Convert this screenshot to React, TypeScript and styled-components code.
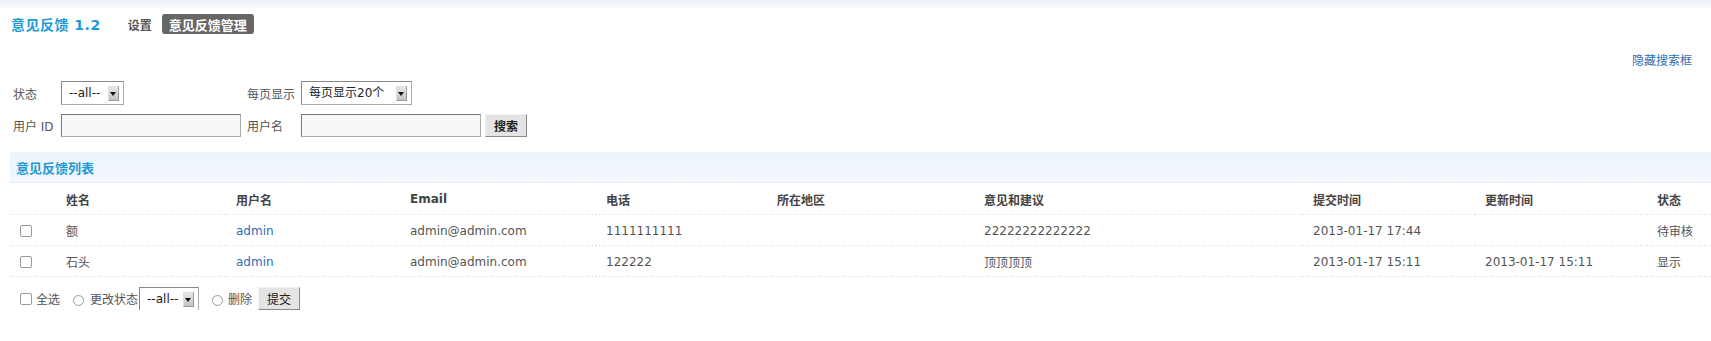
import styled, { createGlobalStyle } from "styled-components";

const GlobalStyle = createGlobalStyle`
  html, body {
    margin: 0;
    padding: 0;
    background: linear-gradient(#e9f1f9 0, #ffffff 10px) no-repeat #fff;
    font-family: "DejaVu Sans", "Noto Sans CJK SC", sans-serif;
    font-size: 12px;
    color: #555;
  }
`;

const dotted = `repeating-linear-gradient(to right, #c9dcee 0 1px, transparent 1px 3px) left bottom / 100% 1px no-repeat`;

const Page = styled.div`
  padding-left: 10px;
  width: 1701px;
`;

const Header = styled.div`
  display: flex;
  align-items: center;
  height: 20px;
  padding: 14px 0 0 1px;
`;

const AppTitle = styled.h1`
  margin: 0;
  font-size: 14px;
  font-weight: bold;
  color: #1d9ad5;
  letter-spacing: 0.5px;
`;

const NavLink = styled.a<{ $active?: boolean }>`
  display: inline-flex;
  align-items: center;
  height: 20px;
  font-weight: bold;
  font-size: ${(p) => (p.$active ? "13px" : "12px")};
  text-decoration: none;
  margin-left: ${(p) => (p.$active ? "10px" : "27px")};
  padding: ${(p) => (p.$active ? "0 7px" : "0")};
  border-radius: 3px;
  background: ${(p) => (p.$active ? "#666" : "transparent")};
  color: ${(p) => (p.$active ? "#fff" : "#555")};
`;

const HideRow = styled.div`
  display: flex;
  justify-content: flex-end;
  margin-top: 20px;
  padding-right: 19px;
  line-height: 14px;
`;

const BlueLink = styled.a`
  color: #2f6db5;
  text-decoration: none;
`;

const Filters = styled.div`
  display: grid;
  grid-template-columns: 48px 186px 54px auto;
  row-gap: 9px;
  align-items: center;
  margin-top: 13px;
  padding-left: 3px;
`;

const Label = styled.span`
  color: #555;
  white-space: nowrap;
`;

const FieldRow = styled.div`
  display: flex;
  align-items: center;
  gap: 4px;
`;

const SelectWrap = styled.div<{ $w: number }>`
  position: relative;
  width: ${(p) => p.$w}px;
  height: 24px;
  box-sizing: border-box;
  border: 1px solid #aaa;
  border-top-color: #888;
  border-left-color: #888;
  background: #fff;
  display: flex;
  align-items: center;
`;

const NativeSelect = styled.select`
  appearance: none;
  border: 0;
  outline: none;
  background: transparent;
  width: 100%;
  height: 100%;
  padding: 0 0 0 7px;
  font-family: "DejaVu Sans", "Noto Sans CJK SC", sans-serif;
  font-size: 12px;
  color: #222;
`;

const Arrow = styled.span`
  position: absolute;
  right: 4px;
  top: 4px;
  width: 11px;
  height: 15px;
  box-sizing: border-box;
  background: linear-gradient(#e8e8e8, #c4c4c4);
  border: 1px solid #999;
  border-top-color: #ddd;
  border-left-color: #ddd;
  pointer-events: none;
  &::after {
    content: "";
    position: absolute;
    left: 1px;
    top: 5px;
    border-left: 3.5px solid transparent;
    border-right: 3.5px solid transparent;
    border-top: 4px solid #111;
  }
`;

const TextInput = styled.input`
  width: 180px;
  height: 23px;
  box-sizing: border-box;
  border: 1px solid #aaa;
  border-top-color: #777;
  border-left-color: #777;
  background: #f8f8f8;
  outline: none;
  padding: 0 4px;
`;

const Button = styled.button<{ $plain?: boolean }>`
  height: 23px;
  padding: 0 8px;
  box-sizing: border-box;
  background: #e4e4e4;
  border: 1px solid #888;
  border-top-color: #f2f2f2;
  border-left-color: #f2f2f2;
  font-family: "DejaVu Sans", "Noto Sans CJK SC", sans-serif;
  font-size: 12px;
  font-weight: ${(p) => (p.$plain ? "normal" : "bold")};
  color: #222;
`;

const Band = styled.div`
  margin-top: 15px;
  margin-right: -10px;
  height: 31px;
  display: flex;
  align-items: center;
  padding-left: 6px;
  background: ${dotted}, linear-gradient(#edf4fc, #f3f8fd);
  font-size: 13px;
  font-weight: bold;
  color: #1d9ad5;
`;

const Table = styled.table`
  width: 1701px;
  border-collapse: collapse;
  table-layout: fixed;
`;

const Col = styled.col<{ $w: number }>`
  width: ${(p) => p.$w}px;
`;

const Th = styled.th`
  height: 32px;
  padding: 0 0 0 10px;
  text-align: left;
  font-size: 12px;
  font-weight: bold;
  color: #444;
  white-space: nowrap;
  background: ${dotted};
`;

const Td = styled.td`
  height: 31px;
  padding: 0 0 0 10px;
  color: #555;
  white-space: nowrap;
  background: ${dotted};
`;

const Check = styled.input.attrs({ type: "checkbox" })`
  appearance: none;
  margin: 0;
  width: 12px;
  height: 12px;
  border: 1px solid #999;
  border-radius: 2px;
  background: #fff;
  vertical-align: middle;
`;

const Radio = styled.input.attrs({ type: "radio" })`
  appearance: none;
  margin: 4px 0 0;
  width: 11px;
  height: 11px;
  border: 1px solid #999;
  border-radius: 50%;
  background: #fff;
`;

const Footer = styled.div`
  display: flex;
  align-items: center;
  height: 23px;
  margin-top: 10px;
  padding-left: 10px;
`;

const FooterItem = styled.label<{ $gap?: number }>`
  display: flex;
  align-items: center;
  gap: ${(p) => p.$gap ?? 5}px;
  margin-right: 13px;
  color: #555;
`;

const InlineSelect = styled(SelectWrap)`
  margin-left: -5px;
`;

const SubmitButton = styled(Button)`
  margin-left: -7px;
`;

type Feedback = {
  name: string;
  user: string;
  email: string;
  phone: string;
  area: string;
  advice: string;
  created: string;
  updated: string;
  status: string;
};

const rows: Feedback[] = [
  {
    name: "额",
    user: "admin",
    email: "admin@admin.com",
    phone: "1111111111",
    area: "",
    advice: "22222222222222",
    created: "2013-01-17 17:44",
    updated: "",
    status: "待审核",
  },
  {
    name: "石头",
    user: "admin",
    email: "admin@admin.com",
    phone: "122222",
    area: "",
    advice: "顶顶顶顶",
    created: "2013-01-17 15:11",
    updated: "2013-01-17 15:11",
    status: "显示",
  },
];

const widths = [46, 170, 174, 196, 171, 207, 329, 172, 172, 64];
const heads = ["", "姓名", "用户名", "Email", "电话", "所在地区", "意见和建议", "提交时间", "更新时间", "状态"];

const App = () => {
  return (
    <Page>
      <GlobalStyle />
      <Header>
        <AppTitle>意见反馈 1.2</AppTitle>
        <NavLink>设置</NavLink>
        <NavLink $active>意见反馈管理</NavLink>
      </Header>

      <HideRow>
        <BlueLink>隐藏搜索框</BlueLink>
      </HideRow>

      <Filters>
        <Label>状态</Label>
        <FieldRow>
          <SelectWrap $w={63}>
            <NativeSelect defaultValue="all">
              <option value="all">--all--</option>
            </NativeSelect>
            <Arrow />
          </SelectWrap>
        </FieldRow>
        <Label>每页显示</Label>
        <FieldRow>
          <SelectWrap $w={111}>
            <NativeSelect defaultValue="20">
              <option value="20">每页显示20个</option>
            </NativeSelect>
            <Arrow />
          </SelectWrap>
        </FieldRow>

        <Label>用户 ID</Label>
        <FieldRow>
          <TextInput />
        </FieldRow>
        <Label>用户名</Label>
        <FieldRow>
          <TextInput />
          <Button>搜索</Button>
        </FieldRow>
      </Filters>

      <Band>意见反馈列表</Band>

      <Table>
        <colgroup>
          {widths.map((w, i) => (
            <Col key={i} $w={w} />
          ))}
        </colgroup>
        <thead>
          <tr>
            {heads.map((h, i) => (
              <Th key={i}>{h}</Th>
            ))}
          </tr>
        </thead>
        <tbody>
          {rows.map((r, i) => (
            <tr key={i}>
              <Td>
                <Check />
              </Td>
              <Td>{r.name}</Td>
              <Td>
                <BlueLink>{r.user}</BlueLink>
              </Td>
              <Td>{r.email}</Td>
              <Td>{r.phone}</Td>
              <Td>{r.area}</Td>
              <Td>{r.advice}</Td>
              <Td>{r.created}</Td>
              <Td>{r.updated}</Td>
              <Td>{r.status}</Td>
            </tr>
          ))}
        </tbody>
      </Table>

      <Footer>
        <FooterItem $gap={4}>
          <Check />
          全选
        </FooterItem>
        <FooterItem $gap={6}>
          <Radio name="op" />
          <span>更改状态</span>
          <InlineSelect $w={60}>
            <NativeSelect defaultValue="all">
              <option value="all">--all--</option>
            </NativeSelect>
            <Arrow />
          </InlineSelect>
        </FooterItem>
        <FooterItem $gap={5}>
          <Radio name="op" />
          删除
        </FooterItem>
        <SubmitButton $plain>提交</SubmitButton>
      </Footer>
    </Page>
  );
};

export default App;
